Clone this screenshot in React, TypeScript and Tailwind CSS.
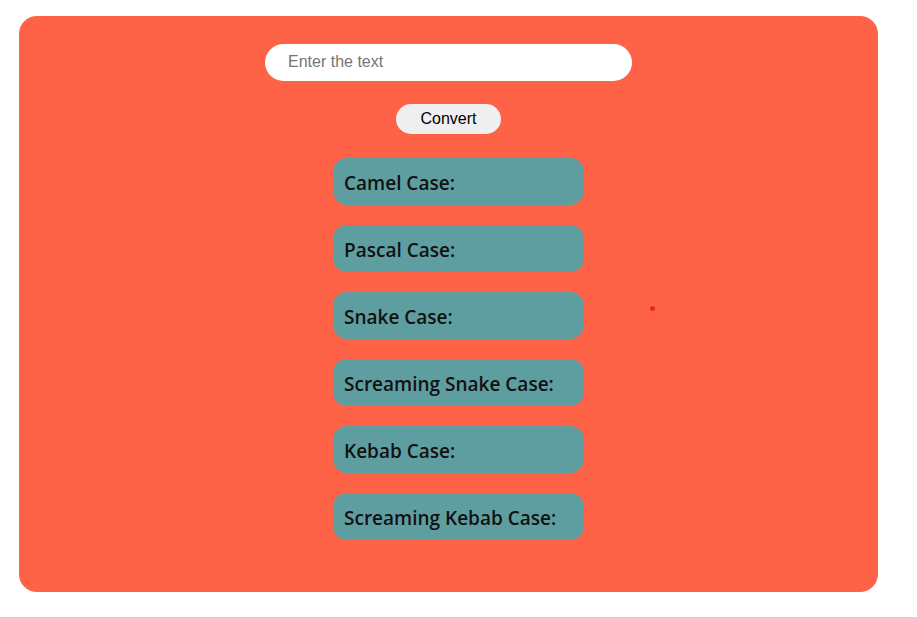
import { useState } from 'react';

const cases = [
  'Camel Case:',
  'Pascal Case:',
  'Snake Case:',
  'Screaming Snake Case:',
  'Kebab Case:',
  'Screaming Kebab Case:',
];

export default function App() {
  const [text, setText] = useState('');

  return (
    <div className="min-h-screen bg-white pt-[16px] pl-[19px]">
      <div className="relative w-[859px] h-[576px] rounded-[18px] bg-[#ff6347] flex flex-col items-center pt-[28px]">
        <input
          value={text}
          onChange={(e) => setText(e.target.value)}
          placeholder="Enter the text"
          className="w-[367px] h-[37px] rounded-full bg-white px-[23px] pb-[1px] text-[16px] text-black outline-none placeholder:text-[#757575] font-['Liberation_Sans',Arial,sans-serif]"
        />
        <button className="mt-[23px] w-[105px] h-[30px] rounded-full bg-[#efefef] text-[16px] text-black font-['Liberation_Sans',Arial,sans-serif]">
          Convert
        </button>
        <div className="mt-[24px] ml-[20px] flex flex-col gap-[20px]">
          {cases.map((c) => (
            <div
              key={c}
              className="w-[251px] h-[47px] rounded-[14px] bg-[#5f9ea0] flex items-center px-[11px] pt-[4px] text-[19px] font-semibold text-[#111] font-['Open_Sans','Noto_Sans',sans-serif]"
            >
              {c}
            </div>
          ))}
        </div>
        <div className="absolute left-[631px] top-[290px] w-[5px] h-[5px] rounded-full bg-[#e02a24]" />
      </div>
    </div>
  );
}
